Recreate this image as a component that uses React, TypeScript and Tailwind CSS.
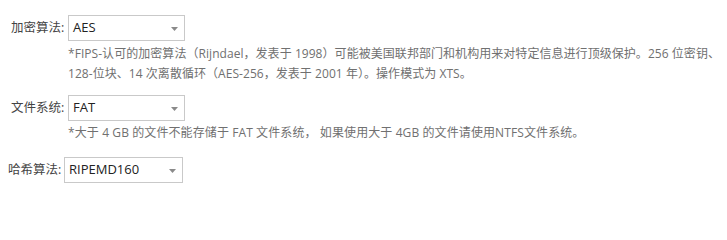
import React from "react";

const font = { fontFamily: '"Open Sans", "Noto Sans CJK SC", sans-serif' };

function Select({ value, width }: { value: string; width: string }) {
  return (
    <div
      className={`relative flex h-[26px] items-center border border-[#c9c9c9] bg-white pl-[4px] text-[13px] text-[#222] ${width}`}
    >
      <span>{value}</span>
      <svg className="absolute right-[6px] top-[11px]" width="7" height="4" viewBox="0 0 7 4">
        <path d="M0 0 L7 0 L3.5 4 Z" fill="#8a8a8a" />
      </svg>
    </div>
  );
}

export default function App() {
  return (
    <div className="h-[219px] w-[727px] bg-white text-[12px]" style={font}>
      <div className="flex flex-col pt-[15px]">
        <div className="flex items-center">
          <div className="w-[68px] pl-[11px] text-[12.5px] text-[#444]">加密算法:</div>
          <Select value="AES" width="w-[117px]" />
        </div>
        <div className="pl-[68px] pt-[3px] text-[12px] leading-[20px] tracking-[0.05px] text-[#707070]">
          <div>*FIPS-认可的加密算法（Rijndael，发表于 1998）可能被美国联邦部门和机构用来对特定信息进行顶级保护。256 位密钥、</div>
          <div>128-位块、14 次离散循环（AES-256，发表于 2001 年）。操作模式为 XTS。</div>
        </div>
        <div className="mt-[11px] flex items-center">
          <div className="w-[68px] pl-[11px] text-[12.5px] text-[#444]">文件系统:</div>
          <Select value="FAT" width="w-[117px]" />
        </div>
        <div className="pl-[68px] pt-[2px] text-[12px] leading-[20px] tracking-[0.1px] text-[#707070]">
          *大于 4 GB 的文件不能存储于 FAT 文件系统， 如果使用大于 4GB 的文件请使用NTFS文件系统。
        </div>
        <div className="mt-[14px] flex items-center">
          <div className="w-[64px] pl-[8px] text-[12.5px] text-[#444]">哈希算法:</div>
          <Select value="RIPEMD160" width="w-[119px]" />
        </div>
      </div>
    </div>
  );
}
